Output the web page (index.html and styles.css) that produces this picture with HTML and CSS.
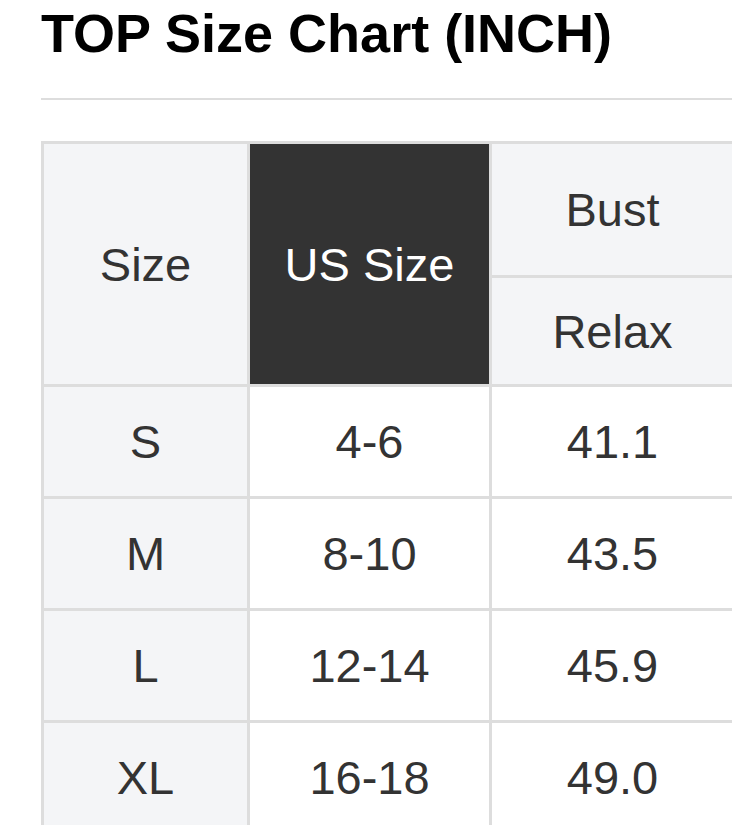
FILE: index.html
```html
<!DOCTYPE html>
<html lang="en">
<head>
<meta charset="utf-8">
<title>TOP Size Chart (INCH)</title>
<link rel="stylesheet" href="styles.css">
</head>
<body>
<div class="page">
  <h1 class="title">TOP Size Chart (INCH)</h1>
  <div class="rule"></div>
  <table class="chart">
    <colgroup>
      <col class="c1">
      <col class="c2">
      <col class="c3">
    </colgroup>
    <thead>
      <tr class="h1row">
        <th rowspan="2" class="head">Size</th>
        <th rowspan="2" class="dark">US Size</th>
        <th class="head">Bust</th>
      </tr>
      <tr class="h2row">
        <th class="head">Relax</th>
      </tr>
    </thead>
    <tbody>
      <tr><td class="head">S</td><td>4-6</td><td>41.1</td></tr>
      <tr><td class="head">M</td><td>8-10</td><td>43.5</td></tr>
      <tr><td class="head">L</td><td>12-14</td><td>45.9</td></tr>
      <tr><td class="head">XL</td><td>16-18</td><td>49.0</td></tr>
    </tbody>
  </table>
</div>
</body>
</html>
```

FILE: styles.css
```css
html, body {
  margin: 0;
  padding: 0;
  background: #ffffff;
}
.page {
  padding-left: 41px;
  font-family: "Liberation Sans", Arial, sans-serif;
  color: #333333;
}
.title {
  margin: 3px 0 0 0;
  font-size: 54px;
  line-height: 60px;
  font-weight: bold;
  color: #000000;
  white-space: nowrap;
}
.rule {
  margin-top: 35px;
  height: 2px;
  background: #dddddd;
}
.chart {
  margin-top: 41px;
  border-collapse: collapse;
  table-layout: fixed;
  width: 692px;
  font-size: 47px;
}
.c1 { width: 206px; }
.c2 { width: 242px; }
.c3 { width: 244px; }
.chart th,
.chart td {
  border: 3px solid #dddddd;
  padding: 0;
  text-align: center;
  vertical-align: middle;
  font-weight: normal;
  color: #333333;
  background: #ffffff;
}
.chart .head {
  background: #f4f5f7;
}
.chart .dark {
  background: #333333;
  color: #ffffff;
}
.h1row { height: 134px; }
.h2row { height: 109px; }
.chart tbody tr { height: 112px; }
```
